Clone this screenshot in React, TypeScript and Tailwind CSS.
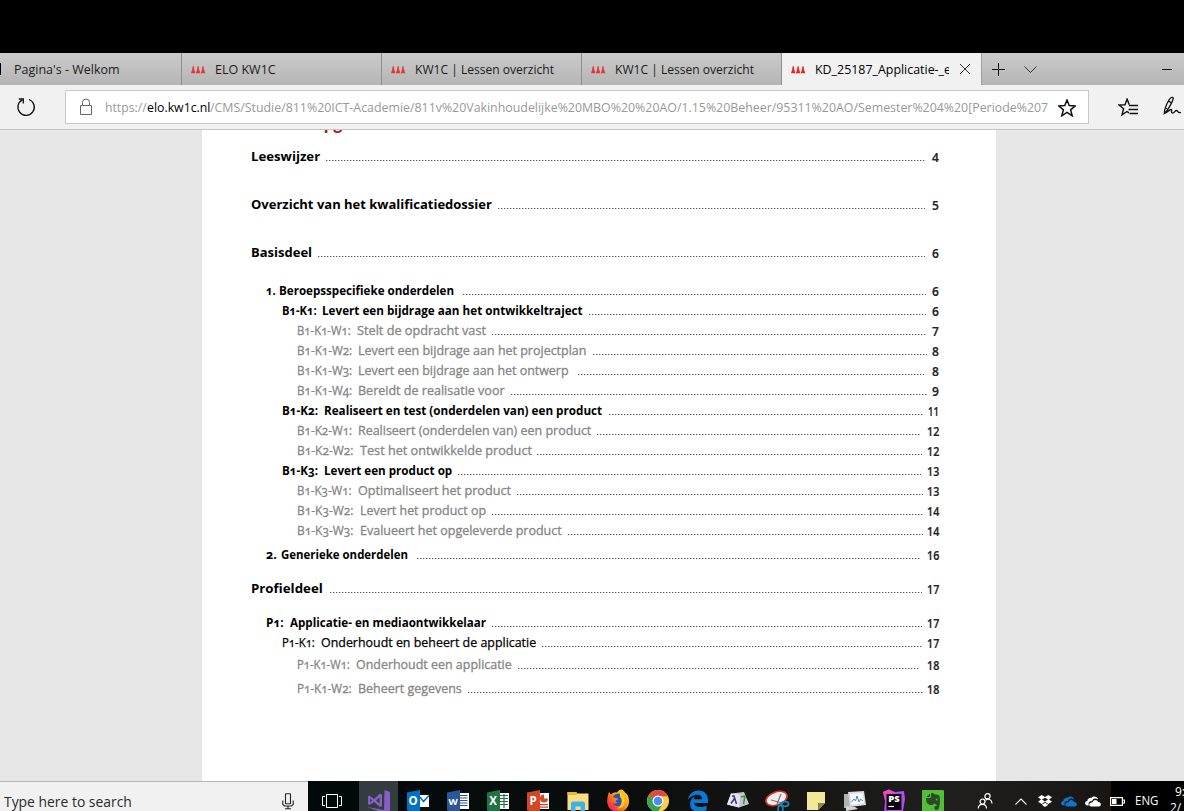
import { useLayoutEffect, useRef, useState } from "react";
import type { ReactNode } from "react";

const UI = "font-['Open_Sans','Noto_Sans',sans-serif]";

/* Text squeezed or stretched horizontally to an exact width. */
function Fit({ w, className = "", children }: { w: number; className?: string; children: ReactNode }) {
  const ref = useRef<HTMLSpanElement>(null);
  const [scale, setScale] = useState(1);
  useLayoutEffect(() => {
    if (ref.current) setScale(w / ref.current.offsetWidth);
  }, [w]);
  return (
    <span className={`block shrink-0 ${className}`} style={{ width: w }}>
      <span ref={ref} className="inline-block origin-left whitespace-pre" style={{ transform: `scaleX(${scale})` }}>
        {children}
      </span>
    </span>
  );
}

function Favicon({ color }: { color: string }) {
  return (
    <svg width="15" height="8" viewBox="0 0 15 8" className="mt-[2px] shrink-0" fill={color}>
      <path d="M0 7.3 L1.2 3.5 L1.6 .3 H2.8 L3.2 3.5 L4.6 7.3Z M4.9 7.3 L6.1 3.5 L6.5 .3 H7.7 L8.1 3.5 L9.5 7.3Z M9.8 7.3 L11 3.5 L11.4 .3 H12.6 L13 3.5 L14.4 7.3Z" />
    </svg>
  );
}

function Tab({ title, w }: { title: string; w: number }) {
  return (
    <div className="flex h-full w-[200px] shrink-0 items-center border-r border-[#8f8f8f] pl-[9px]">
      <Favicon color="#e23a3a" />
      <Fit w={w} className="ml-[9px] pt-[2px] text-[12.5px] leading-8 text-[#1c1c1c]">{title}</Fit>
    </div>
  );
}

function TabBar() {
  return (
    <div className="flex h-8 shrink-0 overflow-hidden bg-linear-to-b from-[#cbcbcb] to-[#b5b5b5]">
      <div className="flex h-full w-[182px] shrink-0 items-center border-r border-[#8f8f8f]">
        <div className="h-3 w-px bg-black" />
        <Fit w={106} className="ml-[13px] pt-[2px] text-[12.5px] leading-8 text-[#1c1c1c]">Pagina's - Welkom</Fit>
      </div>
      <Tab title="ELO KW1C" w={61} />
      <Tab title="KW1C | Lessen overzicht" w={139} />
      <Tab title="KW1C | Lessen overzicht" w={139} />
      <div className="flex h-full w-[200px] shrink-0 items-center border-r border-[#a0a0a0] bg-[#f1f1f1] pl-[9px]">
        <Favicon color="#f0211f" />
        <div className="ml-[9px] w-[134px] overflow-hidden">
          <Fit w={136} className="pt-[2px] text-[12.5px] leading-8 text-black">KD_25187_Applicatie-_e</Fit>
        </div>
        <svg width="12" height="12" viewBox="0 0 12 12" className="ml-[10px]" stroke="#333" fill="none">
          <path d="M1 1 L11 11 M11 1 L1 11" />
        </svg>
      </div>
      <svg width="13" height="13" viewBox="0 0 13 13" className="ml-[10px] mt-[10px]" stroke="#111" fill="none">
        <path d="M6.5 0 V13 M0 6.5 H13" />
      </svg>
      <svg width="13" height="8" viewBox="0 0 13 8" className="ml-[19px] mt-[13px]" stroke="#333" fill="none">
        <path d="M.5 .5 L6.5 6.5 L12.5 .5" />
      </svg>
      <div className="ml-auto mr-[12px] mt-[16px] h-px w-[10px] bg-[#111]" />
    </div>
  );
}

const STAR = "M9 .9 L11.2 6.6 L17.3 6.9 L12.6 10.8 L14.2 16.8 L9 13.4 L3.8 16.8 L5.4 10.8 L.7 6.9 L6.8 6.6Z";

function AddressBar() {
  return (
    <div className="flex h-[45px] shrink-0 items-start overflow-hidden border-b border-[#c6c6c6] bg-[#f1f1f1]">
      <svg width="20" height="20" viewBox="0 0 20 20" className="ml-4 mt-[12px] shrink-0" stroke="#111" strokeWidth="1.3" fill="none">
        <path d="M13 2.5 A8.2 8.2 0 1 1 6.5 2.8" />
        <path d="M2.8 2 H7.3 V6.4" />
      </svg>
      <div className="ml-[29px] mt-[5px] flex h-[34px] w-[1024px] shrink-0 items-center border border-[#c8c8c8] bg-white">
        <svg width="14" height="18" viewBox="0 0 14 18" className="ml-[13px] shrink-0" stroke="#666" fill="none">
          <path d="M1.5 7.5 H12.5 V16.5 H1.5Z M3.5 7.5 V4.5 A3.5 3.5 0 0 1 10.5 4.5 V7.5" />
        </svg>
        <div className="ml-[12px] flex w-[943px] overflow-hidden pt-[2px] text-[12.5px] leading-[32px] text-[#999]">
          <Fit w={42}>https://</Fit>
          <Fit w={63} className="text-black">elo.kw1c.nl</Fit>
          <Fit w={838}>/CMS/Studie/811%20ICT-Academie/811v%20Vakinhoudelijke%20MBO%20%20AO/1.15%20Beheer/95311%20AO/Semester%204%20[Periode%207</Fit>
        </div>
        <svg width="18" height="18" viewBox="0 0 18 18" className="ml-[10px] mt-px shrink-0" stroke="#111" strokeWidth="1.5" fill="none">
          <path d={STAR} />
        </svg>
      </div>
      <svg width="21" height="19" viewBox="0 0 21 19" className="ml-[29px] mt-[13px] shrink-0" stroke="#111" strokeWidth="1.4" fill="none">
        <path d="M11 14.8 L9 13.5 L4 16.8 L5.6 10.8 L1 7 L7 6.8 L9.1 1 L11.2 6.8" />
        <path d="M11 7.5 H20 M10.5 11.5 H20 M11.5 15.5 H20" />
      </svg>
      <svg width="19" height="20" viewBox="0 0 19 20" className="ml-[24px] mt-[11px] shrink-0" stroke="#111" strokeWidth="1.3" fill="none">
        <path d="M1.5 17.5 C1 14 2 11 6 4 C7.5 1.5 9.5 .5 10.2 2 C10.5 4 7 10 4.5 14 L1.5 17.5 C4 17 6 14 8 13.5 C9.5 13.5 7.5 17 9.5 17 C11.5 17 12 14.5 13.5 14.5 C15 14.5 14.5 17.5 18 16.5" />
        <path d="M2.5 12 L5 13.5 M5.5 5 L8.5 7" />
      </svg>
    </div>
  );
}

/* pre/pw: numbering and the distance from its left edge to the title; w: full width of both. */
type Row = { pre?: string; pw?: number; t: string; w: number; gap: number; end: number; n: string; kind: string; mt?: string };

const H1 = "pl-[49px] text-[13px] font-bold";
const H2 = "pl-[64px] text-[13px] font-bold";
const H3 = "pl-[79.5px] text-[13px] font-bold";
const H3N = "pl-[80px] text-[13px] [-webkit-text-stroke:0.25px_#000]";
const H4 = "pl-[95px] text-[13px] text-[#858585] [-webkit-text-stroke:0.3px_#858585]";

const rows: Row[] = [
  { t: "Leeswijzer", w: 69, gap: 6, end: 925, n: "4", kind: H1, mt: "mt-[12px]" },
  { t: "Overzicht van het kwalificatiedossier", w: 241, gap: 6, end: 925, n: "5", kind: H1, mt: "mt-[28px]" },
  { t: "Basisdeel", w: 61, gap: 6, end: 925, n: "6", kind: H1, mt: "mt-[28px]" },
  { pre: "1. ", pw: 13, t: "Beroepsspecifieke onderdelen", w: 188, gap: 9, end: 926, n: "6", kind: H2, mt: "mt-[18px]" },
  { pre: "B1-K1:  ", pw: 40.5, t: "Levert een bijdrage aan het ontwikkeltraject", w: 301, gap: 6, end: 926, n: "6", kind: H3 },
  { pre: "B1-K1-W1:  ", pw: 59.5, t: "Stelt de opdracht vast", w: 188.5, gap: 6, end: 926, n: "7", kind: H4 },
  { pre: "B1-K1-W2:  ", pw: 61, t: "Levert een bijdrage aan het projectplan", w: 289.5, gap: 6, end: 927, n: "8", kind: H4 },
  { pre: "B1-K1-W3:  ", pw: 61, t: "Levert een bijdrage aan het ontwerp", w: 271.5, gap: 9, end: 926, n: "8", kind: H4 },
  { pre: "B1-K1-W4:  ", pw: 61, t: "Bereidt de realisatie voor", w: 207.5, gap: 6, end: 927, n: "9", kind: H4 },
  { pre: "B1-K2:  ", pw: 42, t: "Realiseert en test (onderdelen van) een product", w: 320.5, gap: 7, end: 924, n: "11", kind: H3 },
  { pre: "B1-K2-W1:  ", pw: 61, t: "Realiseert (onderdelen van) een product", w: 294, gap: 6, end: 921, n: "12", kind: H4 },
  { pre: "B1-K2-W2:  ", pw: 62.5, t: "Test het ontwikkelde product", w: 234, gap: 6, end: 922, n: "12", kind: H4 },
  { pre: "B1-K3:  ", pw: 42, t: "Levert een product op", w: 170, gap: 6, end: 921, n: "13", kind: H3 },
  { pre: "B1-K3-W1:  ", pw: 60.5, t: "Optimaliseert het product", w: 213.5, gap: 6, end: 923, n: "13", kind: H4 },
  { pre: "B1-K3-W2:  ", pw: 62.5, t: "Levert het product op", w: 189, gap: 6, end: 923, n: "14", kind: H4 },
  { pre: "B1-K3-W3:  ", pw: 62.5, t: "Evalueert het opgeleverde product", w: 264.5, gap: 6, end: 923, n: "14", kind: H4 },
  { pre: "2. ", pw: 14.5, t: "Generieke onderdelen", w: 142, gap: 9, end: 920, n: "16", kind: H2, mt: "mt-[4px]" },
  { t: "Profieldeel", w: 71.5, gap: 7, end: 922, n: "17", kind: H1, mt: "mt-[14px]" },
  { pre: "P1:  ", pw: 23.5, t: "Applicatie- en mediaontwikkelaar", w: 220, gap: 6, end: 922, n: "17", kind: H2, mt: "mt-[14px]" },
  { pre: "P1-K1:  ", pw: 38.5, t: "Onderhoudt en beheert de applicatie", w: 253.5, gap: 6, end: 922, n: "17", kind: H3N },
  { pre: "P1-K1-W1:  ", pw: 59, t: "Onderhoudt een applicatie", w: 215, gap: 6, end: 920, n: "18", kind: H4, mt: "mt-[2px]" },
  { pre: "P1-K1-W2:  ", pw: 61, t: "Beheert gegevens", w: 164.5, gap: 6, end: 923, n: "18", kind: H4, mt: "mt-[4px]" },
];

function Contents() {
  return (
    <div className="flex min-h-0 flex-1 justify-start overflow-hidden bg-[#e6e6e6] pl-[202px]">
      <div className="h-full w-[794px] bg-white text-black">
        <div className="flex h-[4px] flex-col justify-end overflow-hidden pl-[49px] text-[#b3101b]">
          <Fit w={119} className="mb-[1px] h-[20px] text-[17px] font-bold leading-[20px]">Inhoudsopgave</Fit>
        </div>
        {rows.map((r) => (
          <div key={(r.pre ?? "") + r.t} className={`flex h-5 items-start ${r.mt ?? ""} ${r.kind}`}>
            {r.pre && r.pw && <Fit w={r.pw} className="h-5 leading-5 oldstyle">{r.pre}</Fit>}
            <Fit w={r.w - (r.pw ?? 0)} className="h-5 leading-5">{r.t}</Fit>
            <div
              className="h-px min-w-0 flex-1 self-end mb-[5px] bg-[repeating-linear-gradient(90deg,#555_0,#555_1px,#c8c8c8_1px,#c8c8c8_2px,#fff_2px,#fff_3px)]"
              style={{ marginLeft: r.gap }}
            />
            <div
              className="h-5 shrink-0 text-[12px] font-semibold leading-[21px] text-[#222] [-webkit-text-stroke:0.2px_#222]"
              style={{ width: 939 - r.end, marginRight: 57 }}
            >
              <Fit w={r.n.length > 1 ? (r.n === "11" ? 11 : 12.5) : 7} className="ml-auto pt-px">{r.n}</Fit>
            </div>
          </div>
        ))}
      </div>
    </div>
  );
}

function Office({ color, letter, children }: { color: string; letter: string; children: ReactNode }) {
  return (
    <svg width="24" height="24" viewBox="0 0 24 24">
      <path d="M12 4 H23 V20 H12Z" fill="#fff" />
      {children}
      <path d="M1 3.5 L14 1 V24 L1 21.5Z" fill={color} />
      <text x="7.2" y="16.3" textAnchor="middle" fontSize={letter === "W" ? 9.5 : 11.5} fontWeight="700" fontFamily="Open Sans" fill="#fff">{letter}</text>
    </svg>
  );
}

const apps: ReactNode[] = [
  <Office key="o" color="#0072c6" letter="O">
    <path d="M12 4 H24 V6 H12Z M12 18 H24 V22 H12Z" fill="#071014" />
    <path d="M14 8 L17.5 12.5 L23 6.5" stroke="#0072c6" strokeWidth="1.6" fill="none" />
  </Office>,
  <Office key="w" color="#2b579a" letter="W">
    <path d="M14 6.5 H21.5 M14 9 H21.5 M14 11.5 H21.5 M14 14 H21.5 M14 16.5 H21.5" stroke="#2b579a" strokeWidth="1.2" />
  </Office>,
  <Office key="x" color="#217346" letter="X">
    <path d="M14 6.5 H22 M14 9.5 H22 M14 12.5 H22 M14 15.5 H22 M18 5 V19" stroke="#217346" strokeWidth="1.2" />
  </Office>,
  <Office key="p" color="#d24726" letter="P">
    <path d="M18 5.5 V9.5 H22 A4 4 0 1 1 18 5.5Z M14 15 H22 V16.2 H14Z M14 17.5 H22 V18.7 H14Z" fill="#d24726" />
  </Office>,
  <svg key="f" width="24" height="24" viewBox="0 0 24 24">
    <path d="M1.5 3 H10 L11.5 4.5 H22.5 V21 H1.5Z" fill="#fbdc83" />
    <path d="M1.5 3 H10 L11.3 4.7 L10 6 H1.5Z" fill="#eeb62c" />
    <path d="M5 22 V14 L6.5 12.5 H17.5 L19 14 V22 H14.5 V17.5 H9.5 V22Z" fill="#3cb1e5" />
  </svg>,
  <svg key="ff" width="24" height="24" viewBox="0 0 24 24">
    <defs>
      <linearGradient id="fox" x1="1" y1="0" x2="0" y2="1">
        <stop offset="0" stopColor="#ffe226" /><stop offset=".45" stopColor="#ff980e" /><stop offset=".8" stopColor="#f5304a" />
      </linearGradient>
    </defs>
    <path d="M3 3 L5 5.5 C7 3.5 9 3 11 3.5 C12 1.5 14 .5 15.5 .5 C18 1 18.5 4 21 5 C24 10 24 17 19 21 C12 26 2 22 1.2 13.5 C1 9 2 6 3 3Z" fill="url(#fox)" />
    <path d="M7 8 C8 5 12 4 14 5 C16 7 18 10 17.5 13 C16.5 18 9 18.5 6.5 14 C8 15 10 15 11.5 13.5 C9 13 9.5 11 12 10.5 C12.5 9 9 9.5 7 8Z" fill="#2458b8" />
    <path d="M14 3 C17 5 20 9 18.5 15 C17.5 18 14 20 11 19.5 C16 17.5 17 10 14 8Z" fill="#ffcb1f" />
  </svg>,
  <svg key="c" width="24" height="24" viewBox="0 0 24 24">
    <circle cx="12" cy="12" r="11" fill="#ffcd40" />
    <path d="M12 12 L2.5 6.5 A11 11 0 0 0 12 23 L17 14Z" fill="#32a456" />
    <path d="M12 12 L2.5 6.5 A11 11 0 0 1 22 7.3 H12Z" fill="#df4b3e" />
    <circle cx="12" cy="12" r="5.5" fill="#fff" /><circle cx="12" cy="12" r="4.3" fill="#4c8bf5" />
  </svg>,
  <svg key="e" width="24" height="24" viewBox="0 0 24 24">
    <path d="M2 10.5 C3 5 7 1.5 12.5 1.5 C18.5 1.5 22 5.5 22 11 V14 H8.2 C8.8 18 14 19.5 20.5 16.5 V21 C12 25.5 4 22 4 15 C4 11.5 6 9 9 7.5 C8.3 8.4 8 9.3 7.9 10.3 H16 C16 7.5 14.5 5.8 11.5 5.8 C7.5 5.8 4.5 7.5 2 10.5Z" fill="#0a78d7" />
  </svg>,
  <svg key="l" width="24" height="24" viewBox="0 0 24 24">
    <path d="M5 4.5 L18 3 L23 15 L13 18.5 L1 15.5Z" fill="#c4c6cf" />
    <path d="M5 4.5 L14 5.5 L13 18.5 L1 15.5Z" fill="#e5e6ec" />
    <path d="M6 7 H8 L10.5 15 M8.5 9.5 L5 14.5" stroke="#3b3982" strokeWidth="1.6" fill="none" />
    <path d="M15 8 L19 7 L17.5 15" stroke="#3b8f55" strokeWidth="1.5" fill="none" />
  </svg>,
  <svg key="s" width="26" height="24" viewBox="0 0 26 24">
    <ellipse cx="12.5" cy="9.5" rx="11" ry="6.5" fill="#ededed" stroke="#d5312d" strokeWidth="1.6" transform="rotate(-20 12.5 9.5)" />
    <path d="M7 11 L18 14 M17 5 L13 15" stroke="#777" strokeWidth="1.2" />
    <g stroke="#1785bb" strokeWidth="1.8" fill="none"><ellipse cx="21" cy="15" rx="3.5" ry="2.3" /><ellipse cx="16.5" cy="20" rx="2.4" ry="3.7" /></g>
  </svg>,
  <svg key="n" width="24" height="24" viewBox="0 0 24 24">
    <path d="M3 3 H21 V14 L14 21 H3Z" fill="#f3e899" /><path d="M21 14 H14 V21Z" fill="#8b824f" />
  </svg>,
  <svg key="m" width="26" height="24" viewBox="0 0 26 24">
    <path d="M2 5 H8 V19 H2Z" fill="#aeb3b5" /><path d="M6 3 L22 2 L24 16 L8 18Z" fill="#d9dcdd" />
    <path d="M8 5 L20.5 4 L22 14 L9.5 16Z" fill="#f8fafb" /><path d="M4 17 L13 18 L16 20 L4 22Z" fill="#d4d4d4" />
    <path d="M9.5 13 L12 10 L13.5 12 L15 7 L17 13 L18.5 10 L21 12" stroke="#428fbd" fill="none" />
  </svg>,
  <svg key="ps" width="24" height="24" viewBox="0 0 24 24">
    <path d="M1 3 L7 .5 L13 3 L22 2 L23 10 L21 22 L14 24 H2 L3 12Z" fill="#b34bf0" /><path d="M1 3 L7 .5 L13 4 L4 13Z" fill="#f649b6" />
    <path d="M4.5 5 H19.5 V21 H4.5Z" fill="#080609" />
    <text x="12" y="13.4" fontSize="9.5" textAnchor="middle" fontWeight="800" fontFamily="Open Sans" fill="#fff">PS</text>
    <path d="M6.5 17.5 H12" stroke="#fff" strokeWidth="1.2" />
  </svg>,
  <svg key="ev" width="24" height="24" viewBox="0 0 24 24">
    <rect x="1" y="1" width="22" height="23" rx="1" fill="#54bd38" />
    <path d="M9 4.5 V8 H5.5Z" fill="#284c24" />
    <path d="M10 4 C12 4 13 4.5 13.5 5.2 C16 5.3 18.2 6 18.6 7.5 C19.3 11 19 17 17.5 20 C16 22 13 21 13.3 18.5 C13.5 17 15 17 16 17.2 C15.5 15.5 14 14.5 13 14.5 C12 17 9 16 7 15 C5.5 14 5 11 5 9 H9.2 Q10 9 10 8Z" fill="#284c24" />
    <circle cx="15.7" cy="10.5" r=".9" fill="#54bd38" />
  </svg>,
];

function Cloud({ color, className }: { color: string; className: string }) {
  return (
    <svg width="16" height="11" viewBox="0 0 16 11" className={`shrink-0 ${className}`} fill={color}>
      <path d="M3.8 9.5 H2.7 C-.7 9.5 -.7 5.2 2.3 5 C2.5 2 5.5 1.5 6.2 2 C7.5 -.5 12.5 0 13 3.2 C9.5 1.8 7.5 3 7.1 5 C4 5 3 7 3.8 9.5Z M6.3 10.5 C3.2 10.5 3.7 6.2 7.7 6.3 C8.5 3 12.5 3.5 13 6 C16.5 5.8 16.8 10.5 13.8 10.5Z" />
    </svg>
  );
}

function Taskbar() {
  return (
    <div className="flex h-[30px] shrink-0 overflow-hidden bg-black">
      <div className="flex h-[40px] w-[308px] shrink-0 items-center border-t border-[#b5b5b5] bg-[#f1f1f1] pl-[4px]">
        <Fit w={128} className="text-[14px] leading-[40px] text-[#2a2a2a]">Type here to search</Fit>
        <svg width="12" height="17" viewBox="0 0 12 17" className="ml-auto mr-[14px] shrink-0" stroke="#222" strokeWidth="1.1" fill="none">
          <rect x="3.5" y=".8" width="5" height="10" rx=".6" /><path d="M.8 7.5 V11.5 L2.5 13 H9.5 L11.2 11.5 V7.5 M6 13 V15.8 M3 15.8 H9" />
        </svg>
      </div>
      <div className="flex h-[40px] w-[646px] shrink-0 items-center bg-linear-to-r from-[#02090b] via-[#0b0d0c] to-[#201f1d]">
        <svg width="20" height="14" viewBox="0 0 20 14" className="ml-[14px] mr-[17px] shrink-0" stroke="#fff" fill="none">
          <path d="M4.5 .5 H15.5 V13.5 H4.5Z M3 2.5 H.5 V11.5 H3 M17 2.5 H19.5 V11.5 H17" />
        </svg>
        <div className="flex h-full w-[39px] shrink-0 items-center justify-center bg-[#353c3f]">
          <svg width="24" height="24" viewBox="0 0 24 24" fill="#865fc5">
            <path d="M17.5 1 L23 3 V24 H17Z M0 18 L17 21 V24Z" />
            <path fillRule="evenodd" d="M1 7.5 L2.5 6.5 L7 10 L13 4.5 L15 5.5 V17 L13 18 L7 13 L2.5 16 L1 15Z M3 9.5 V13.2 L5 11.4Z M9 11.5 L12.5 14.5 V8.5Z" />
          </svg>
        </div>
        {apps.map((a, i) => (
          <div key={i} className={`flex shrink-0 items-center justify-center ${i < 8 ? "w-[40px]" : "w-[39.1px]"}`}>{a}</div>
        ))}
      </div>
      <div className="flex h-[40px] min-w-0 flex-1 items-center bg-linear-to-r from-[#201f1d] from-0% via-[#171615] via-[68%] to-black to-[69%]">
        <svg width="16" height="16" viewBox="0 0 16 16" className="ml-[23px] shrink-0" stroke="#fff" strokeWidth="1.2" fill="none">
          <circle cx="10.5" cy="3.3" r="2.6" /><circle cx="5.5" cy="8.6" r="2.5" />
          <path d="M1.3 15.5 C1.3 10 9.5 10 9.5 15.5 M8.6 7.2 C11 5 15 6.5 15 10.5" />
        </svg>
        <svg width="12" height="7" viewBox="0 0 12 7" className="ml-[22px] shrink-0" stroke="#fff" strokeWidth="1.1" fill="none"><path d="M.5 6.5 L6 1 L11.5 6.5" /></svg>
        <svg width="14" height="12" viewBox="0 0 14 12" className="ml-[11px] shrink-0" fill="#fff">
          <path d="M3.7 0 L7 2.1 L10.3 0 L14 2.3 L11 4.6 L14 6.8 L10.3 9 L7 6.8 L3.7 9 L0 6.8 L3 4.6 L0 2.3Z M3.7 9.8 L7 7.8 L10.3 9.8 L7 12Z" />
          <path d="M7 2.7 L10 4.6 L7 6.4 L4 4.6Z" fill="#171717" />
        </svg>
        <Cloud color="#0c75cc" className="ml-[9px]" />
        <Cloud color="#fff" className="ml-[8px]" />
        <svg width="15" height="9" viewBox="0 0 15 9" className="ml-[9px] mt-[1px] shrink-0" fill="none" stroke="#fff" strokeWidth="1.2">
          <path d="M.6 .6 H12.4 V8.4 H.6Z M13 3 H14.4 V6 H13" /><path d="M2 2 H6.5 V7 H2Z" fill="#fff" stroke="none" />
        </svg>
        <Fit w={23} className="ml-[10px] text-[12px] leading-[40px] text-white">ENG</Fit>
        <div className="ml-[12px] mt-[3px] shrink-0 self-start text-[12px] leading-4 text-white">
          <div className="pl-[5px]">9:</div>
          <div>2/</div>
        </div>
      </div>
    </div>
  );
}

export default function App() {
  return (
    <div className={`flex h-[811px] w-[1184px] flex-col overflow-hidden bg-black ${UI}`}>
      <style>{".oldstyle{font-variant-numeric:oldstyle-nums}"}</style>
      <div className="h-[53px] shrink-0 bg-black" />
      <TabBar />
      <AddressBar />
      <Contents />
      <Taskbar />
    </div>
  );
}
